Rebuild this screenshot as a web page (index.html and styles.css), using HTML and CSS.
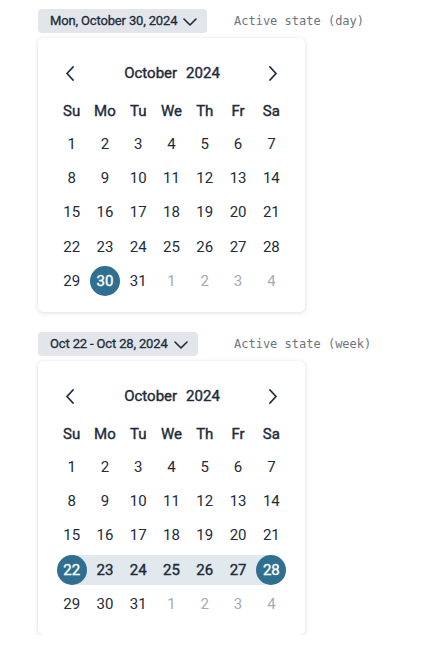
FILE: index.html
```html
<!DOCTYPE html>
<html>
<head>
<meta charset="utf-8">
<link rel="stylesheet" href="styles.css">
</head>
<body>
<main class="page">
  <section class="demo">
    <div class="row">
      <div class="trigger-slot">
        <button class="trigger">Mon, October 30, 2024
          <svg class="chev" width="14" height="8" viewBox="0 0 14 8"><path d="M1 1l6 6 6-6" fill="none" stroke="#1d2b3a" stroke-width="1.6" stroke-linecap="round" stroke-linejoin="round"/></svg>
        </button>
      </div>
      <span class="label">Active state (day)</span>
    </div>
    <div class="card">
      <div class="head">
        <button class="nav"><svg width="10" height="15" viewBox="0 0 10 15"><path d="M8 1L2 7.5 8 14" fill="none" stroke="#1d2b3a" stroke-width="1.8" stroke-linecap="round" stroke-linejoin="round"/></svg></button>
        <div class="title"><span>October</span><span>2024</span></div>
        <button class="nav"><svg width="10" height="15" viewBox="0 0 10 15"><path d="M2 1l6 6.5L2 14" fill="none" stroke="#1d2b3a" stroke-width="1.8" stroke-linecap="round" stroke-linejoin="round"/></svg></button>
      </div>
      <div class="weekdays"><span>Su</span><span>Mo</span><span>Tu</span><span>We</span><span>Th</span><span>Fr</span><span>Sa</span></div>
      <div class="days">
        <span class="d"><i>1</i></span><span class="d"><i>2</i></span><span class="d"><i>3</i></span><span class="d"><i>4</i></span><span class="d"><i>5</i></span><span class="d"><i>6</i></span><span class="d"><i>7</i></span>
        <span class="d"><i>8</i></span><span class="d"><i>9</i></span><span class="d"><i>10</i></span><span class="d"><i>11</i></span><span class="d"><i>12</i></span><span class="d"><i>13</i></span><span class="d"><i>14</i></span>
        <span class="d"><i>15</i></span><span class="d"><i>16</i></span><span class="d"><i>17</i></span><span class="d"><i>18</i></span><span class="d"><i>19</i></span><span class="d"><i>20</i></span><span class="d"><i>21</i></span>
        <span class="d"><i>22</i></span><span class="d"><i>23</i></span><span class="d"><i>24</i></span><span class="d"><i>25</i></span><span class="d"><i>26</i></span><span class="d"><i>27</i></span><span class="d"><i>28</i></span>
        <span class="d"><i>29</i></span><span class="d sel"><i>30</i></span><span class="d"><i>31</i></span><span class="d out"><i>1</i></span><span class="d out"><i>2</i></span><span class="d out"><i>3</i></span><span class="d out"><i>4</i></span>
      </div>
    </div>
  </section>

  <section class="demo">
    <div class="row">
      <div class="trigger-slot">
        <button class="trigger">Oct 22 - Oct 28, 2024
          <svg class="chev" width="14" height="8" viewBox="0 0 14 8"><path d="M1 1l6 6 6-6" fill="none" stroke="#1d2b3a" stroke-width="1.6" stroke-linecap="round" stroke-linejoin="round"/></svg>
        </button>
      </div>
      <span class="label">Active state (week)</span>
    </div>
    <div class="card">
      <div class="head">
        <button class="nav"><svg width="10" height="15" viewBox="0 0 10 15"><path d="M8 1L2 7.5 8 14" fill="none" stroke="#1d2b3a" stroke-width="1.8" stroke-linecap="round" stroke-linejoin="round"/></svg></button>
        <div class="title"><span>October</span><span>2024</span></div>
        <button class="nav"><svg width="10" height="15" viewBox="0 0 10 15"><path d="M2 1l6 6.5L2 14" fill="none" stroke="#1d2b3a" stroke-width="1.8" stroke-linecap="round" stroke-linejoin="round"/></svg></button>
      </div>
      <div class="weekdays"><span>Su</span><span>Mo</span><span>Tu</span><span>We</span><span>Th</span><span>Fr</span><span>Sa</span></div>
      <div class="days">
        <span class="d"><i>1</i></span><span class="d"><i>2</i></span><span class="d"><i>3</i></span><span class="d"><i>4</i></span><span class="d"><i>5</i></span><span class="d"><i>6</i></span><span class="d"><i>7</i></span>
        <span class="d"><i>8</i></span><span class="d"><i>9</i></span><span class="d"><i>10</i></span><span class="d"><i>11</i></span><span class="d"><i>12</i></span><span class="d"><i>13</i></span><span class="d"><i>14</i></span>
        <span class="d"><i>15</i></span><span class="d"><i>16</i></span><span class="d"><i>17</i></span><span class="d"><i>18</i></span><span class="d"><i>19</i></span><span class="d"><i>20</i></span><span class="d"><i>21</i></span>
        <span class="d sel start"><i>22</i></span><span class="d range"><i>23</i></span><span class="d range"><i>24</i></span><span class="d range"><i>25</i></span><span class="d range"><i>26</i></span><span class="d range"><i>27</i></span><span class="d sel end"><i>28</i></span>
        <span class="d"><i>29</i></span><span class="d"><i>30</i></span><span class="d"><i>31</i></span><span class="d out"><i>1</i></span><span class="d out"><i>2</i></span><span class="d out"><i>3</i></span><span class="d out"><i>4</i></span>
      </div>
    </div>
  </section>
</main>
</body>
</html>
```

FILE: styles.css
```css
* { box-sizing: border-box; }
html, body { margin: 0; background: #ffffff; }
body {
  font-family: Roboto, "Liberation Sans", sans-serif;
  color: #1d2b3a;
}
.page {
  display: flex;
  flex-direction: column;
  gap: 20px;
  padding: 9px 0 0 38px;
}
.demo {
  display: flex;
  flex-direction: column;
  gap: 5px;
}
.row {
  display: flex;
  align-items: center;
}
.trigger-slot {
  width: 196px;
  flex: none;
}
.trigger {
  display: inline-flex;
  align-items: center;
  gap: 6px;
  height: 24px;
  padding: 0 10px 0 12px;
  border: 0;
  border-radius: 4px;
  background: #e2e6ea;
  color: #1d2b3a;
  font-family: Roboto, "Liberation Sans", sans-serif;
  font-size: 13px;
  font-weight: 400;
  letter-spacing: -0.15px;
  -webkit-text-stroke: 0.3px #1d2b3a;
  line-height: 24px;
}
.chev { display: block; margin-top: 1px; }
.label {
  font-family: "DejaVu Sans Mono", "Liberation Mono", monospace;
  font-size: 12px;
  color: #6b7380;
}
.card {
  width: 267px;
  padding: 17px 17px 16px;
  background: #fff;
  border-radius: 5px;
  box-shadow: 0 1px 5px rgba(20, 30, 45, 0.14), 0 0 1px rgba(20, 30, 45, 0.08);
}
.head {
  display: flex;
  align-items: center;
  justify-content: space-between;
  height: 36px;
}
.nav {
  width: 30px;
  height: 30px;
  padding: 0;
  border: 0;
  background: none;
  display: flex;
  align-items: center;
  justify-content: center;
}
.nav svg { display: block; }
.title {
  display: flex;
  gap: 9px;
  font-size: 15px;
  font-weight: 400;
  -webkit-text-stroke: 0.4px #1d2b3a;
  margin-left: 1px;
}
.weekdays, .days {
  display: grid;
  grid-template-columns: repeat(7, 1fr);
}
.weekdays {
  margin-top: 5px;
  height: 30px;
  align-items: center;
  text-align: center;
  font-size: 15px;
  font-weight: 400;
  -webkit-text-stroke: 0.4px #1d2b3a;
}
.days {
  margin-top: 2.5px;
  grid-auto-rows: 30px;
  row-gap: 4.4px;
}
.d {
  display: flex;
  align-items: center;
  justify-content: center;
  font-size: 15px;
}
.d i {
  font-style: normal;
  width: 30px;
  height: 30px;
  border-radius: 50%;
  display: flex;
  align-items: center;
  justify-content: center;
}
.out { color: #a4abb5; }
.sel i {
  background: #2f6f8f;
  color: #ffffff;
  -webkit-text-stroke: 0.4px #ffffff;
}
.range {
  background: #e2e9ee;
  -webkit-text-stroke: 0.4px #1d2b3a;
}
.start { background: linear-gradient(to right, transparent 50%, #e2e9ee 50%); }
.end { background: linear-gradient(to left, transparent 50%, #e2e9ee 50%); }
```
